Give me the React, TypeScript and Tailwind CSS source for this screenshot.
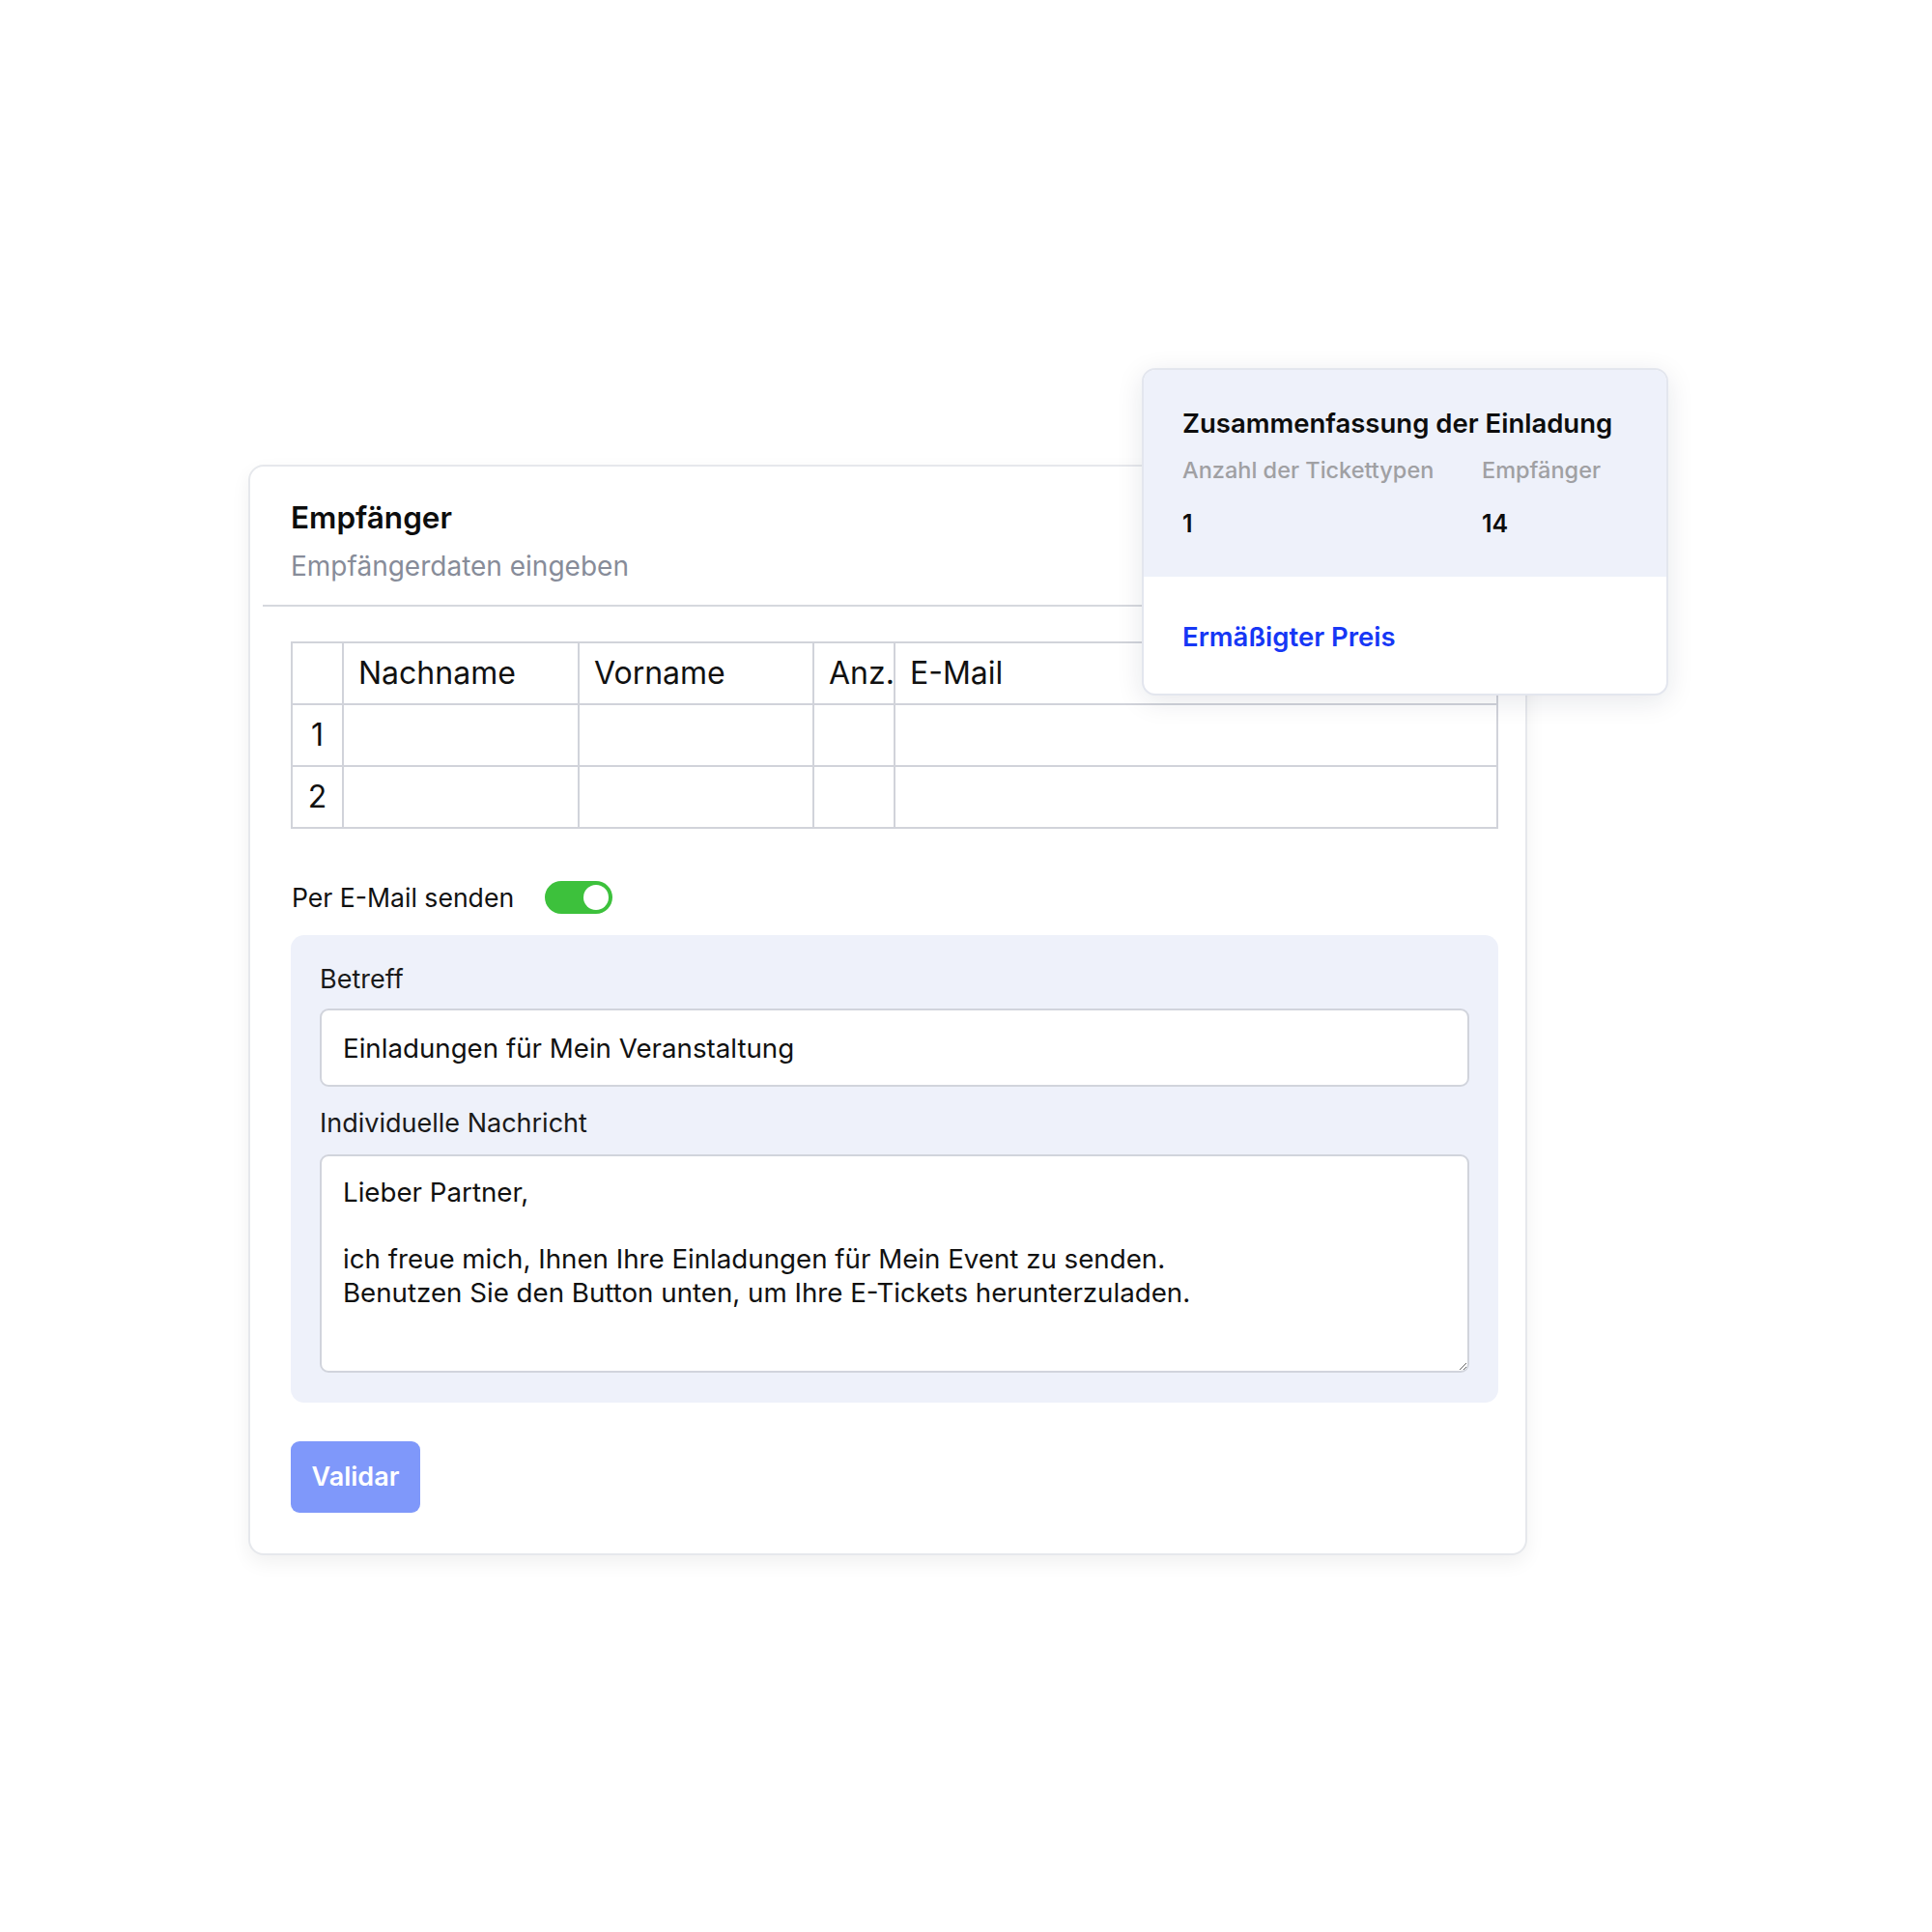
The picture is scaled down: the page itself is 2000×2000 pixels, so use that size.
import * as React from "react";

const font = { fontFamily: "Inter, 'Noto Sans', sans-serif" };

const columns = [
  { label: "", width: "w-[53px]" },
  { label: "Nachname", width: "w-[244px]" },
  { label: "Vorname", width: "w-[243px]" },
  { label: "Anz.", width: "w-[84px]" },
  { label: "E-Mail", width: "" },
];

const RecipientTable = () => (
  <table className="w-full table-fixed border-collapse border-2 border-[#d1d3da] text-[32px] text-[#111]">
    <colgroup>
      {columns.map((c, i) => (
        <col key={i} className={c.width} />
      ))}
    </colgroup>
    <thead>
      <tr className="h-[64px]">
        {columns.map((c, i) => (
          <th
            key={i}
            className="border-2 border-[#d1d3da] px-[15px] text-left font-normal leading-none whitespace-nowrap"
          >
            {c.label}
          </th>
        ))}
      </tr>
    </thead>
    <tbody>
      {[1, 2].map((n) => (
        <tr key={n} className="h-[64px]">
          <td className="border-2 border-[#d1d3da] text-center leading-none">{n}</td>
          <td className="border-2 border-[#d1d3da]" />
          <td className="border-2 border-[#d1d3da]" />
          <td className="border-2 border-[#d1d3da]" />
          <td className="border-2 border-[#d1d3da]" />
        </tr>
      ))}
    </tbody>
  </table>
);

const Toggle = () => (
  <div className="relative h-[34px] w-[70px] rounded-full bg-[#3dc13c]">
    <span className="absolute right-[4px] top-[4px] h-[26px] w-[26px] rounded-full bg-white" />
  </div>
);

const SummaryPopup = () => (
  <div className="absolute left-[923px] top-[-102px] w-[545px] overflow-hidden rounded-[14px] border-2 border-[#e3e6ee] bg-white shadow-[0_6px_28px_rgba(20,30,60,0.10)]">
    <div className="bg-[#eef1fa] px-[40px] pt-[38px] pb-[40px]">
      <h3 className="text-[27.5px] font-semibold leading-[34px] text-[#0d0d0d]">
        Zusammenfassung der Einladung
      </h3>
      <div className="mt-[18px] grid grid-cols-[310px_1fr]">
        <span className="text-[23.5px] font-medium leading-[28px] text-[#a0a0a3]">
          Anzahl der Tickettypen
        </span>
        <span className="text-[23.5px] font-medium leading-[28px] text-[#a0a0a3]">
          Empfänger
        </span>
        <span className="mt-[26px] text-[25px] font-semibold leading-[30px] text-[#0d0d0d]">1</span>
        <span className="mt-[26px] text-[25px] font-semibold leading-[30px] text-[#0d0d0d]">14</span>
      </div>
    </div>
    <div className="px-[40px] pt-[45px] pb-[42px]">
      <span className="text-[27.5px] font-semibold leading-[34px] text-[#1637f5]">
        Ermäßigter Preis
      </span>
    </div>
  </div>
);

export default function App() {
  return (
    <div className="min-h-[2000px] bg-white pl-[257px] pt-[481px]" style={font}>
      <div className="relative w-[1324px] rounded-[16px] border-2 border-[#e6e8ec] bg-white pl-[42px] pr-[28px] pt-[35px] pb-[42px] shadow-[0_8px_20px_rgba(0,0,0,0.06)]">
        <h2 className="text-[31.5px] font-semibold leading-[36px] text-[#0d0d0d]">Empfänger</h2>
        <p className="mt-[15px] text-[28px] leading-[34px] text-[#878c99]">Empfängerdaten eingeben</p>
        <div className="ml-[-29px] mr-[-14px] mt-[23px] h-[2px] bg-[#d6d8de]" />

        <div className="mt-[36px]">
          <RecipientTable />
        </div>

        <div className="mt-[54px] flex items-center gap-[32px]">
          <span className="pl-[1px] text-[26.6px] leading-[32px] text-[#111]">Per E-Mail senden</span>
          <Toggle />
        </div>

        <div className="mt-[22px] rounded-[14px] bg-[#eef1fa] px-[30px] pt-[30px] pb-[31px]">
          <label className="block text-[27px] leading-[32px] text-[#1a1a1a]">Betreff</label>
          <input
            className="mt-[14px] block h-[81px] w-full rounded-[9px] border-2 border-[#d1d4dc] bg-white px-[22px] text-[27.7px] text-[#111] outline-none"
            defaultValue="Einladungen für Mein Veranstaltung"
          />
          <label className="mt-[22px] block text-[27px] leading-[32px] text-[#1a1a1a]">
            Individuelle Nachricht
          </label>
          <textarea
            className="mt-[16px] block h-[226px] w-full rounded-[9px] border-2 border-[#d1d4dc] bg-white px-[22px] pt-[20px] text-[27.7px] leading-[34.5px] text-[#111] outline-none"
            defaultValue={
              "Lieber Partner,\n\nich freue mich, Ihnen Ihre Einladungen für Mein Event zu senden.\nBenutzen Sie den Button unten, um Ihre E-Tickets herunterzuladen."
            }
          />
        </div>

        <button className="mt-[40px] h-[74px] w-[134px] rounded-[9px] bg-[#7f98fa] text-[27px] font-semibold text-white">
          Validar
        </button>

        <SummaryPopup />
      </div>
    </div>
  );
}
